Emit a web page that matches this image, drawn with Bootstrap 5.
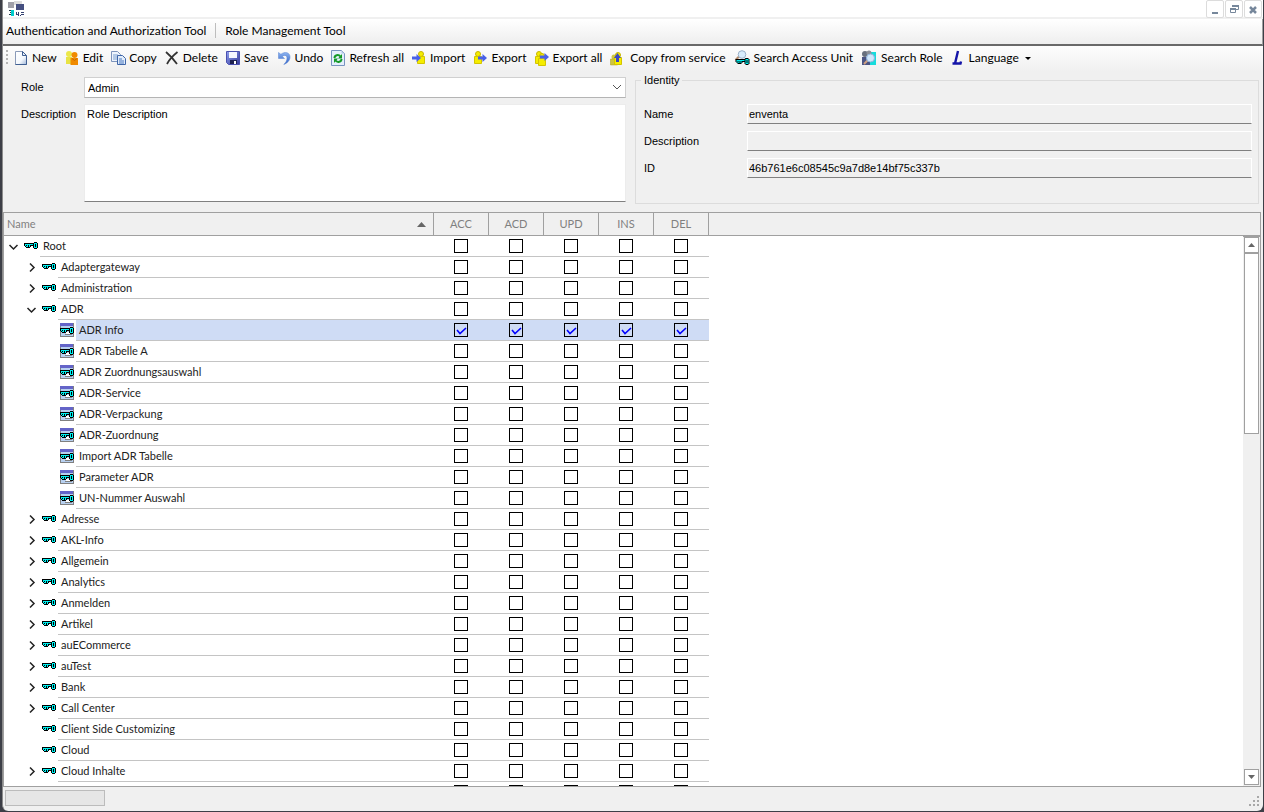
<!DOCTYPE html>
<html lang="en">
<head>
<meta charset="utf-8">
<meta name="viewport" content="width=device-width, initial-scale=1">
<title>Role Management Tool</title>
<link href="https://cdn.jsdelivr.net/npm/bootstrap@5.3.0/dist/css/bootstrap.min.css" rel="stylesheet">
<script defer src="https://cdn.jsdelivr.net/npm/bootstrap@5.3.0/dist/js/bootstrap.bundle.min.js"></script>
<style>
  body { background: #3d3f47; font: 12px/16px Lato, "Open Sans", sans-serif; color: #000; }
  .app-window { margin: 0 1px 1px 2px; background: #f0f0f0; border-left: 1px solid #8c8c8c; border-radius: 0 0 6px 6px; overflow: hidden; height: calc(100vh - 1px); }
  .app-window > * { flex: none; }
  .title-strip { height: 19px; background: #fff; border-bottom: 2px solid #f0f0f0; padding: 0 1px 0 5px; }
  .win-btn { width: 18px; height: 18px; border: 1px solid #dcdcdc; border-radius: 2px; background: #fff; padding: 0; line-height: 0; margin-left: 1px; }
  .menu-strip { height: 27px; padding: 0 0 2px 3px; gap: 9px; background: linear-gradient(#fff, #eee); border-bottom: 2px solid #696969; border-right: 1px solid #a0a0a0; }
  .menu-strip a, .tool-strip button { color: #000; text-decoration: none; white-space: nowrap; }
  .menu-rule { width: 1px; height: 15px; background: #bdbdbd; }
  .tool-strip { height: 25px; padding: 0 0 2px 3px; gap: 8px; background: linear-gradient(#fdfdfd, #f0f0f0); }
  .tool-strip button { border: 0; background: none; padding: 0; gap: 2px; }
  .tool-strip .roomy { gap: 4px; }
  .tool-strip svg { flex: none; width: 16px; height: 16px; }
  .grip { width: 2px; height: 15px; margin-right: -2px; background: repeating-linear-gradient(#b4b4b4 0 2px, transparent 2px 4px); }
  .form-area { font: 11px/14px "Liberation Sans", Arial, sans-serif; padding: 6px 0 8px; }
  .form-area select, .form-area textarea, .form-area input { font: inherit; color: #000; border-radius: 0; }
  .role-col { padding: 0 7px 0 18px; }
  .field-label { width: 63px; flex: none; padding-top: 3px; }
  .pick { height: 21px; padding: 2px 3px; border: 1px solid #d0d0d0; border-bottom-color: #b4b4b4; background: #fff; appearance: none; }
  .pick-arrow { right: 4px; top: 7px; pointer-events: none; }
  .note-row { margin-top: 6px; }
  .note-box { height: 98px; padding: 2px; border: 1px solid #ececec; border-bottom-color: #808080; resize: none; }
  .ident { border: 1px solid #dcdcdc; margin: 3px 4px 0 2px; height: 124px; padding: 23px 6px 0 8px; }
  .ident legend { left: 5px; top: -8px; font: inherit; padding: 0 3px; background: #f0f0f0; width: auto; margin: 0; }
  .ident-row + .ident-row { margin-top: 7px; }
  .ident label { width: 103px; flex: none; }
  .ident input { height: 20px; padding: 0 1px; border: 1px solid #fff; border-bottom-color: #808080; background: #f0f0f0; min-width: 0; }
  .tree-pane { flex: 1 1 0 !important; min-height: 0; font: 11px/20px Lato, "Open Sans", sans-serif; border: 1px solid #a0a0a0; margin-right: 2px; background: #fff; }
  .tree-grid { table-layout: fixed; border-collapse: separate; border-spacing: 0; width: 100%; color: #222; }
  .tree-grid th { height: 23px; padding: 0 3px; font-weight: 400; color: #808080; background: #f0f0f0; border-bottom: 1px solid #a0a0a0; border-right: 1px solid #a0a0a0; }
  .tree-grid th:last-child { border-right: 0; }
  .tree-grid td { padding: 0; height: 21px; }
  .tree-grid .tick-cell, .node-text { border-bottom: 1px solid #c4c4c4; height: 21px; }
  .col-name { width: 430px; }
  .col-tick { width: 55px; }
  .slot { width: 18px; flex: none; height: 20px; }
  .slot button { border: 0; background: none; padding: 0; line-height: 0; }
  .lvl-1 { padding-left: 18px; }
  .lvl-2 { padding-left: 54px; }
  .node-text { padding-left: 3px; white-space: nowrap; }
  .picked .node-text, .picked .tick-cell { background: #cfdcf5; }
  .tick { appearance: none; width: 14px; height: 14px; border: 1px solid #000; margin: 0 0 0 20px; display: block; }
  .tick:checked { background: url("data:image/svg+xml,%3Csvg xmlns='http://www.w3.org/2000/svg' viewBox='0 0 12 12'%3E%3Cpath d='M2 6l3 3.500 6-5.500' fill='none' stroke='%230000ff' stroke-width='1.600'/%3E%3C/svg%3E"); }
  .scroll-lane { top: 23px; right: 0; bottom: 0; width: 17px; background: #f0f0f0; border-top: 1px solid #a0a0a0; padding: 0 1px 1px; }
  .scroll-lane button { display: block; width: 15px; height: 16px; padding: 0; border: 1px solid #a0a0a0; background: #fff; line-height: 0; }
  .thumb { width: 15px; height: 181px; border: 1px solid #a0a0a0; background: #fff; }
  .status-strip { height: 24px; padding: 3px 3px 4px 2px; }
  .status-cell { width: 100px; height: 16px; background: #e6e6e6; border: 1px solid #bcbcbc; }
</style>
</head>
<body>
<svg class="position-absolute" width="0" height="0" aria-hidden="true">
  <defs>
    <linearGradient id="g-page" x1="0" y1="0" x2="1" y2="1"><stop offset="0" stop-color="#fff"/><stop offset=".6" stop-color="#f4f8fd"/><stop offset="1" stop-color="#9fb6d8"/></linearGradient>
    <linearGradient id="g-save" x1="0" y1="0" x2="1" y2="1"><stop offset="0" stop-color="#8fa0ee"/><stop offset="1" stop-color="#353a9c"/></linearGradient>
    <linearGradient id="g-undo" x1="0" y1="0" x2="0" y2="1"><stop offset="0" stop-color="#8db4f0"/><stop offset="1" stop-color="#2f5fc4"/></linearGradient>
  </defs>
  <symbol id="i-key" viewBox="0 0 14 8"><path d="M10 0h3v1h1v5h-1v1h-3V6H9V4H7v1H6v1H2V5H1V4H0V1h9z"/><path d="M1 2h8v1H1zM1 3h1v1H1zM3 3h1v2H3zM5 3h1v2H5zM10 1h3v5h-3z" fill="#00f0f0"/><path d="M11 2h1v3h-1z"/><path d="M2 4h1v1H2z" fill="#00f0f0"/></symbol>
  <symbol id="i-unit" viewBox="0 0 14 14"><path d="M0 0h14v14H0z" fill="#808080"/><path d="M1 3h12v10H1z" fill="#b7d0f0"/><path d="M0 0h13v3H0z" fill="#6464c8"/><path d="M5 11h7v1H5z" fill="#808080"/><path d="M6 9h5v2H6z" fill="#fff"/><use href="#i-key" x="0" y="4" width="14" height="8"/></symbol>
  <symbol id="i-new" viewBox="0 0 16 16"><path d="M1.500 1.500h7l4 4v9h-11z" fill="url(#g-page)" stroke="#8a9ab8"/><path d="M12.500 6v8.500h-11" fill="none" stroke="#3f5f92"/><path d="M8.500 1.500v4h4z" fill="#e8eff8" stroke="#3f5f92"/></symbol>
  <symbol id="i-edit" viewBox="0 0 16 16"><circle cx="4" cy="4" r="3" fill="#ece84a"/><path d="M1 7h6v7H1z" fill="#e8e344"/><circle cx="9.500" cy="5" r="3" fill="#f08a00"/><path d="M5.500 8h7.500v7H5.500z" fill="#f08a00"/><path d="M7 8.500l2.500 2 2.500-2" fill="none" stroke="#c46a00"/></symbol>
  <symbol id="i-copy" viewBox="0 0 16 16"><path d="M.5 1.500h6l3 3v7h-9z" fill="#eef4fc" stroke="#7d94bc"/><path d="M2 5h5M2 7h5M2 9h4" stroke="#7b9fd0"/><path d="M6.500 5.500h5l3 3v6h-8z" fill="#e1ecfa" stroke="#3f66a8"/><path d="M8 9h3M8 11h5M8 13h5" stroke="#4a78c0"/></symbol>
  <symbol id="i-delete" viewBox="0 0 16 16"><path d="M1 2q6 5 11 12M12.500 2Q5 8 2 14" fill="none" stroke="#333" stroke-width="1.800"/></symbol>
  <symbol id="i-save" viewBox="0 0 16 16"><path d="M.5 1.500h13v13h-11l-2-2z" fill="url(#g-save)" stroke="#4a50b0"/><path d="M3 2h8v6H3z" fill="#f4f6ff"/><path d="M4 10h7v4H4z" fill="#1e2250"/><path d="M8 11h2v3H8z" fill="#fff"/></symbol>
  <symbol id="i-undo" viewBox="0 0 16 16"><path d="M1.500 2.500V8.500H7.500L5.300 6.400C7.500 4.600 10 5.200 10 8c0 2.500-1.200 4.500-3.200 6.500C10.500 13 13 10.500 13 7c0-4.500-5-6-9.100-2.700z" fill="url(#g-undo)" stroke="#5682d2" stroke-width=".5"/></symbol>
  <symbol id="i-refresh" viewBox="0 0 16 16"><path d="M.5 .5h10l3 3v12H.5z" fill="#e4effc" stroke="#7894c0"/><path d="M10.500 .5v3h3z" fill="#b4c8e6"/><path d="M3.500 8c0-3 4-4 6-1.500M10.500 9c0 3-4 4-6 1.500" fill="none" stroke="#159a28" stroke-width="2"/><path d="M11 4v4.500H7zM3 13V8.500h4z" fill="#159a28"/></symbol>
  <symbol id="i-person" viewBox="0 0 16 16"><circle cx="5" cy="4" r="2.500" fill="#f5ed00" stroke="#c8b600"/><path d="M1.500 6.500h7v7h-7z" fill="#f5ed00" stroke="#d4c400"/></symbol>
  <symbol id="i-arrow" viewBox="0 0 9 8"><path d="M0 2.500h4.500V0L9 4 4.500 8V5.500H0z" fill="#4860e8"/></symbol>
  <symbol id="i-import" viewBox="0 0 16 16"><use href="#i-person" x="4" y="0" width="16" height="16"/><use href="#i-arrow" x="0" y="4" width="9" height="8"/></symbol>
  <symbol id="i-export" viewBox="0 0 16 16"><use href="#i-person" x="0" y="0" width="16" height="16"/><use href="#i-arrow" x="5" y="4" width="9" height="8"/></symbol>
  <symbol id="i-export-all" viewBox="0 0 16 16"><use href="#i-person" x="-1" y="0" width="16" height="16"/><use href="#i-person" x="2" y="2" width="16" height="16"/><use href="#i-arrow" x="5" y="3" width="9" height="8"/></symbol>
  <symbol id="i-service" viewBox="0 0 16 16"><circle cx="4" cy="7" r="2.500" fill="#cfc63c"/><path d="M.5 9h7v6h-7z" fill="#cfc63c" stroke="#a89d20" stroke-width=".5"/><use href="#i-person" x="3" y="1" width="16" height="16"/><path d="M6 12V8H4l3.500-5L11 8H9v4z" fill="#3a48c0"/></symbol>
  <symbol id="i-find-unit" viewBox="0 0 16 16"><path d="M1.500 10l4-4" stroke="#b58a6a" stroke-width="2"/><circle cx="8" cy="4.500" r="3.800" fill="#d8ecfb" stroke="#9ab0c8"/><use href="#i-key" x="1" y="8" width="15" height="8"/></symbol>
  <symbol id="i-find-role" viewBox="0 0 16 16"><path d="M9 2h6v13H9z" fill="#16dcdc"/><path d="M1 7h8v8H1z" fill="#4b5584"/><circle cx="4" cy="4" r="3" fill="#68707e"/><circle cx="8" cy="3" r="2.500" fill="#8a8f98"/><path d="M3 14l4-4" stroke="#d0a080" stroke-width="2"/><circle cx="9.500" cy="8" r="4" fill="#cfe6fa" stroke="#8fb4dc"/></symbol>
  <symbol id="i-lang" viewBox="0 0 16 16"><path d="M7 1L4 13.500M1.500 13.500h8l.5-2" fill="none" stroke="#1414a8" stroke-width="2.400"/></symbol>
</svg>

<div class="app-window d-flex flex-column">
  <header class="title-strip d-flex justify-content-between">
    <svg width="16" height="17" viewBox="0 0 16 17" shape-rendering="crispEdges" aria-hidden="true"><path d="M0 2h6v6H0z" fill="#a0a0a8"/><path d="M6 1h8v4H6z" fill="#dcdcdc"/><path d="M8 4h8v6H8z" fill="#454f80"/><path d="M1 10h5v1H1zM2 12h4v1H2zM1 14h4v1H1z" fill="#234"/><path d="M3 10h3v6H3z" fill="#0cc"/><path d="M8 12h1v2h1v-2h1v4h-1v-1H8zM12 15h1v1h-1zM13 12h3v1h-3zM13 14h3v1h-3z" fill="#334070"/></svg>
    <div class="d-flex">
      <button class="win-btn" aria-label="Minimize"><svg width="14" height="14"><path d="M4 10h6v2H4z" fill="#76879b"/></svg></button>
      <button class="win-btn" aria-label="Restore"><svg width="14" height="14" fill="none" stroke="#76879b"><path d="M5.500 5V3.500h6v4H9M3.500 6.500h5v4h-5z"/><path d="M5 4h7M3 7h6" stroke-width="2"/></svg></button>
      <button class="win-btn" aria-label="Close"><svg width="14" height="14" stroke="#76879b" stroke-width="2.500"><path d="M4 5l6 6M10 5l-6 6"/></svg></button>
    </div>
  </header>

  <nav class="menu-strip d-flex align-items-center">
    <a href="#">Authentication and Authorization Tool</a>
    <span class="menu-rule"></span>
    <a href="#">Role Management Tool</a>
  </nav>

  <div class="tool-strip d-flex align-items-center" role="toolbar" aria-label="Role actions">
    <span class="grip"></span>
    <button class="d-flex align-items-center"><svg><use href="#i-new"/></svg>New</button>
    <button class="d-flex align-items-center"><svg><use href="#i-edit"/></svg>Edit</button>
    <button class="d-flex align-items-center"><svg><use href="#i-copy"/></svg>Copy</button>
    <button class="d-flex align-items-center"><svg><use href="#i-delete"/></svg>Delete</button>
    <button class="d-flex align-items-center"><svg><use href="#i-save"/></svg>Save</button>
    <button class="d-flex align-items-center"><svg><use href="#i-undo"/></svg>Undo</button>
    <button class="d-flex align-items-center"><svg><use href="#i-refresh"/></svg>Refresh all</button>
    <button class="d-flex align-items-center"><svg><use href="#i-import"/></svg>Import</button>
    <button class="d-flex align-items-center"><svg><use href="#i-export"/></svg>Export</button>
    <button class="d-flex align-items-center"><svg><use href="#i-export-all"/></svg>Export all</button>
    <button class="roomy d-flex align-items-center"><svg><use href="#i-service"/></svg>Copy from service</button>
    <button class="roomy d-flex align-items-center"><svg><use href="#i-find-unit"/></svg>Search Access Unit</button>
    <button class="roomy d-flex align-items-center"><svg><use href="#i-find-role"/></svg>Search Role</button>
    <button class="d-flex align-items-center"><svg><use href="#i-lang"/></svg>Language<svg class="ms-1" style="width:7px" viewBox="0 0 7 16"><path d="M0 7h6L3 10z"/></svg></button>
  </div>

  <form class="form-area row g-0">
    <div class="col-6 role-col">
      <div class="d-flex">
        <label class="field-label" for="role">Role</label>
        <div class="position-relative flex-grow-1">
          <select class="pick w-100 d-block" id="role"><option>Admin</option></select>
          <svg class="pick-arrow position-absolute" width="10" height="7"><path d="M1 1l4 4 4-4" fill="none" stroke="#555"/></svg>
        </div>
      </div>
      <div class="note-row d-flex">
        <label class="field-label" for="note">Description</label>
        <textarea class="note-box flex-grow-1" id="note">Role Description</textarea>
      </div>
    </div>
    <div class="col-6">
      <fieldset class="ident position-relative">
        <legend class="position-absolute">Identity</legend>
        <div class="ident-row d-flex align-items-center"><label for="idName">Name</label><input class="flex-grow-1" id="idName" value="enventa" readonly></div>
        <div class="ident-row d-flex align-items-center"><label for="idDesc">Description</label><input class="flex-grow-1" id="idDesc" readonly></div>
        <div class="ident-row d-flex align-items-center"><label for="idKey">ID</label><input class="flex-grow-1" id="idKey" value="46b761e6c08545c9a7d8e14bf75c337b" readonly></div>
      </fieldset>
    </div>
  </form>

  <main class="tree-pane position-relative overflow-hidden">
    <table class="tree-grid">
      <colgroup><col class="col-name"><col class="col-tick"><col class="col-tick"><col class="col-tick"><col class="col-tick"><col class="col-tick"><col></colgroup>
      <thead>
        <tr>
          <th scope="col"><div class="d-flex justify-content-between align-items-center">Name<svg class="me-1" width="9" height="5"><path d="M0 5l4.500-5L9 5z" fill="#666"/></svg></div></th>
          <th class="text-center" scope="col">ACC</th><th class="text-center" scope="col">ACD</th><th class="text-center" scope="col">UPD</th><th class="text-center" scope="col">INS</th><th class="text-center" scope="col">DEL</th><th></th>
        </tr>
      </thead>
      <tbody id="nodes"></tbody>
    </table>
    <div class="scroll-lane position-absolute d-flex flex-column">
      <button aria-label="Scroll up"><svg width="7" height="4"><path d="M0 4l3.500-4L7 4z" fill="#666"/></svg></button>
      <div class="thumb"></div>
      <button class="mt-auto" aria-label="Scroll down"><svg width="7" height="4"><path d="M0 0l3.500 4L7 0z" fill="#666"/></svg></button>
    </div>
  </main>

  <footer class="status-strip d-flex justify-content-between align-items-start">
    <div class="status-cell"></div>
    <svg class="mt-auto" width="11" height="11" fill="#a8a8a8" shape-rendering="crispEdges"><path d="M8 0h2v2H8zM4 4h2v2H4zM8 4h2v2H8zM0 8h2v2H0zM4 8h2v2H4zM8 8h2v2H8z"/></svg>
  </footer>
</div>

<script>
  // [label, depth, state]: open and shut nodes have a chevron, leaves none
  const nodes = [
    ["Root", 0, "open"], ["Adaptergateway", 1, "shut"], ["Administration", 1, "shut"], ["ADR", 1, "open"],
    ["ADR Info", 2, "picked"], ["ADR Tabelle A", 2], ["ADR Zuordnungsauswahl", 2], ["ADR-Service", 2],
    ["ADR-Verpackung", 2], ["ADR-Zuordnung", 2], ["Import ADR Tabelle", 2], ["Parameter ADR", 2],
    ["UN-Nummer Auswahl", 2], ["Adresse", 1, "shut"], ["AKL-Info", 1, "shut"], ["Allgemein", 1, "shut"],
    ["Analytics", 1, "shut"], ["Anmelden", 1, "shut"], ["Artikel", 1, "shut"], ["auECommerce", 1, "shut"],
    ["auTest", 1, "shut"], ["Bank", 1, "shut"], ["Call Center", 1, "shut"], ["Client Side Customizing", 1],
    ["Cloud", 1], ["Cloud Inhalte", 1, "shut"], ["", 1]
  ];
  const rights = ["ACC", "ACD", "UPD", "INS", "DEL"];
  const chevrons = { open: "M1.500 4l4 4 4-4", shut: "M4 1.500l4 4-4 4" };
  document.getElementById("nodes").innerHTML = nodes.map(([label, depth, state]) => {
    const chevron = chevrons[state]
      ? `<button type="button" aria-label="Toggle ${label}"><svg width="11" height="11"><path d="${chevrons[state]}" fill="none" stroke="#222" stroke-width="1.500"/></svg></button>` : "";
    const icon = depth === 2 ? `<svg width="14" height="14" shape-rendering="crispEdges"><use href="#i-unit"/></svg>`
      : label ? `<svg width="14" height="8" shape-rendering="crispEdges"><use href="#i-key"/></svg>` : "";
    const gap = depth === 2 ? "" : `<span class="slot d-flex align-items-center justify-content-center">${chevron}</span>`;
    return `<tr class="${state === "picked" ? "picked" : ""}">
      <td><div class="d-flex lvl-${depth}">${gap}<span class="slot d-flex align-items-center justify-content-center">${icon}</span><span class="node-text flex-grow-1">${label}</span></div></td>
      ${rights.map(r => `<td class="tick-cell"><input class="tick" type="checkbox" aria-label="${label} ${r}" ${state === "picked" ? "checked" : ""}></td>`).join("")}
      <td></td></tr>`;
  }).join("");
</script>
</body>
</html>
